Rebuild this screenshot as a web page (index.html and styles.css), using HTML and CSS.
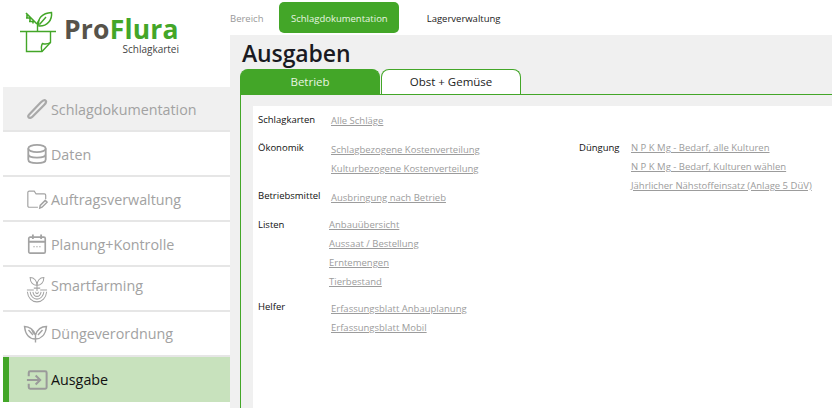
FILE: index.html
```html
<!DOCTYPE html>
<html lang="de">
<head>
<meta charset="utf-8">
<title>ProFlura Schlagkartei</title>
<link rel="stylesheet" href="styles.css">
</head>
<body>
<div class="app">
  <aside class="sidebar">
    <div class="logo">
      <svg class="logo-mark" width="38" height="42" viewBox="0 0 38 42" fill="none" stroke="#43a628" stroke-width="1.4">
        <path d="M0 20.500H36" stroke-width="1.300"/>
        <path d="M6.500 20.500V40.500H22L30.500 31.500V20.500"/>
        <path d="M22 40.500C21 37 21.500 34 22.500 32.500C25 33.500 28 33 30.500 31.500"/>
        <path d="M17.500 20.500V14C17.500 12 18 10 19 9"/>
        <path d="M19 15C17 8 22 2 31.500 1.500C32.500 9 27 15.500 19 15Z" stroke-width="1.500"/>
        <path d="M19.500 13.500L26 6"/>
        <path d="M6 2L17 13M7 3L7 7M10 6L10 10M13 9L13 12.500M6 7H10M9 10.500H13" stroke-width="1.600"/>
      </svg>
      <div class="logo-text">
        <div class="logo-name"><span class="logo-pro">Pro</span><span class="logo-flura">Flura</span></div>
        <div class="logo-sub">Schlagkartei</div>
      </div>
    </div>
    <nav class="menu">
      <a class="menu-item hover">
        <svg class="ico" viewBox="0 0 24 24" fill="none" stroke="#a9a9a9" stroke-width="2.400"><path d="M3.500 18L16 5C18 3 20.500 2 21.500 3C22.500 4 21 6.500 19.500 8L7 20.500C5.500 22 3.500 22 2.800 21C2 20 2.500 19 3.500 18Z"/></svg>
        <span>Schlagdokumentation</span>
      </a>
      <a class="menu-item">
        <svg class="ico" viewBox="0 0 24 24" fill="none" stroke="#a3a3a3" stroke-width="2"><ellipse cx="12" cy="6" rx="9.500" ry="4"/><path d="M2.500 6V18C2.500 20.500 7 22 12 22S21.500 20.500 21.500 18V6M2.500 12C2.500 14.500 7 16 12 16S21.500 14.500 21.500 12"/></svg>
        <span>Daten</span>
      </a>
      <a class="menu-item">
        <svg class="ico" viewBox="0 0 24 24" fill="none" stroke="#a3a3a3" stroke-width="1.300"><path d="M13 21H3.500C2.500 21 2 20.500 2 19.500V5C2 4 2.500 3.500 3.500 3.500H9L11 6.500H20C21 6.500 21.500 7 21.500 8V12"/><path d="M15 22L15.500 19L21 13.500L23 15.500L17.500 21Z" stroke-width="1.600"/></svg>
        <span>Auftragsverwaltung</span>
      </a>
      <a class="menu-item">
        <svg class="ico" viewBox="0 0 24 24" fill="none" stroke="#a3a3a3" stroke-width="1.800"><rect x="3" y="4.500" width="18" height="17.500" rx="1.500"/><path d="M3 9.500H21M7.500 1.500V6.500M16.500 1.500V6.500" stroke-width="2"/><path d="M8 15H9.500M11.200 15H12.700M14.400 15H15.900" stroke-width="1.200"/></svg>
        <span>Planung+Kontrolle</span>
      </a>
      <a class="menu-item smart">
        <svg class="ico ico-tall" viewBox="0 0 24 29" fill="none" stroke="#a3a3a3" stroke-width="1.100"><path d="M12 16V9M12 10C8 10 4.500 7 4.500 1.500C9 1.500 12 5 12 10ZM12 10C12 5 15 1.500 19.500 1.500C19.500 7 16 10 12 10Z"/><path d="M1 15H8.500M15.500 15H23M8.500 13H15.500" /><path d="M1.500 17C2 23.500 6.500 28 12 28S22 23.500 22.500 17M4.500 17C5 21.500 8 25 12 25S19 21.500 19.500 17M7.500 17C8 19.500 9.500 22 12 22S16 19.500 16.500 17M10.500 17C10.500 18.500 11 19 12 19S13.500 18.500 13.500 17"/></svg>
        <span>Smartfarming</span>
      </a>
      <a class="menu-item flat">
        <svg class="ico ico-wide" viewBox="0 0 24 18" fill="none" stroke="#a3a3a3" stroke-width="1.400"><path d="M12 17.500V10M12 14C6.500 14 2 10.500 1 1.500C4 1.500 6 2.500 8 4M12 14C17 14 22 10.500 23 1.500C18 1.500 14 4 12 10C11 7 9.500 5 8 4C9 7 10.500 9 12 10"/><path d="M5 5L9.500 10M19 5L14.500 10"/></svg>
        <span>Düngeverordnung</span>
      </a>
      <a class="menu-item flat active">
        <svg class="ico" viewBox="0 0 24 24" fill="none" stroke="#9a9a9a" stroke-width="2.200"><path d="M3 8V4C3 3 3.500 2.500 4.500 2.500H21C22 2.500 22.500 3 22.500 4V20C22.500 21 22 21.500 21 21.500H4.500C3.500 21.500 3 21 3 20V16"/><path d="M1 12H15M10.500 7L15.500 12L10.500 17"/></svg>
        <span>Ausgabe</span>
      </a>
    </nav>
  </aside>
  <div class="main">
    <header class="topnav">
      <span class="topnav-label">Bereich</span>
      <a class="topnav-btn current">Schlagdokumentation</a>
      <a class="topnav-btn">Lagerverwaltung</a>
    </header>
    <section class="stage">
      <h1 class="title">Ausgaben</h1>
      <div class="tabs">
        <a class="tab on">Betrieb</a>
        <a class="tab">Obst + Gemüse</a>
      </div>
      <div class="panel">
        <div class="sheet">
          <div class="col col-left">
            <div class="group g-karten"><div class="label">Schlagkarten</div><div class="links"><a>Alle Schläge</a></div></div>
            <div class="group g-oeko"><div class="label">Ökonomik</div><div class="links"><a>Schlagbezogene Kostenverteilung</a><a>Kulturbezogene Kostenverteilung</a></div></div>
            <div class="group g-mittel"><div class="label">Betriebsmittel</div><div class="links"><a>Ausbringung nach Betrieb</a></div></div>
            <div class="group g-listen"><div class="label">Listen</div><div class="links shift"><a>Anbauübersicht</a><a>Aussaat / Bestellung</a><a>Erntemengen</a><a>Tierbestand</a></div></div>
            <div class="group g-helfer"><div class="label">Helfer</div><div class="links"><a>Erfassungsblatt Anbauplanung</a><a>Erfassungsblatt Mobil</a></div></div>
          </div>
          <div class="col col-right">
            <div class="group g-duengung"><div class="label">Düngung</div><div class="links"><a>N P K Mg - Bedarf, alle Kulturen</a><a>N P K Mg - Bedarf, Kulturen wählen</a><a>Jährlicher Nähstoffeinsatz (Anlage 5 DüV)</a></div></div>
          </div>
        </div>
      </div>
    </section>
  </div>
</div>
</body>
</html>
```
FILE: styles.css
```css
* { box-sizing: border-box; }
html, body { margin: 0; height: 408px; overflow: hidden; background: #fff; }
body { font-family: "Open Sans", "Noto Sans", sans-serif; color: #111; }
.app { display: flex; width: 832px; height: 408px; }

.sidebar { width: 230px; flex: none; padding-left: 3px; }
.logo { height: 87px; display: flex; padding: 11px 0 0 17px; gap: 7px; }
.logo-mark { flex: none; }
.logo-text { width: 115px; margin-left: -1px; padding-top: 3px; }
.logo-name { font-weight: 700; font-size: 26.500px; line-height: 30px; letter-spacing: .2px; white-space: nowrap; }
.logo-pro { color: #57534a; }
.logo-flura { color: #43a628; }
.logo-sub { font-size: 10px; line-height: 10px; text-align: right; color: #444; }

.menu { display: flex; flex-direction: column; }
.menu-item { height: 45px; display: flex; align-items: center; gap: 3px; padding: 1px 0 0 23px; font-size: 14.300px; color: #a2a2a2; border-bottom: 2px solid #e6e6e6; }
.menu-item span { line-height: 22px; margin-top: 2px; }
.menu-item.flat span { margin-top: 0; }
.menu-item.hover { background: #f0f0f0; }
.menu-item.active { background: #c8e2bd; color: #111; border-bottom: 0; border-left: 6px solid #43a628; padding-left: 17px; }
.menu-item.smart { align-items: flex-start; padding-top: 9px; }
.menu-item.smart span { margin-top: -1px; }
.ico { width: 22px; height: 22px; flex: none; }
.ico-tall { height: 27px; }
.ico-wide { width: 25px; height: 18px; margin-left: -3px; }

.main { flex: 1; min-width: 0; display: flex; flex-direction: column; }
.topnav { height: 35px; flex: none; display: flex; align-items: flex-start; padding-top: 2px; font-size: 9.500px; }
.topnav-label { color: #999; line-height: 34px; margin-right: 16px; }
.topnav-btn { height: 31px; line-height: 34px; padding: 0 11.500px; border-radius: 5px; color: #222; margin-right: 16px; }
.topnav-btn.current { background: #43a628; color: #e8f5e0; }
.stage { flex: 1; min-height: 0; display: flex; flex-direction: column; background: #f0f0f0; padding-left: 10px; overflow: hidden; }
.title { margin: 0; flex: none; height: 34px; padding: 1px 0 0 2px; font-size: 23px; line-height: 34px; font-weight: 600; color: #1a1a22; letter-spacing: -.1px; }
.tabs { display: flex; flex: none; gap: 1px; height: 25px; }
.tab { width: 140px; background: #fff; border: 1px solid #43a628; border-bottom: 0; border-radius: 8px 8px 0 0; text-align: center; font-size: 11.500px; line-height: 23px; color: #222; }
.tab.on { background: #43a628; color: #e8f5e0; }
.panel { flex: 1; min-height: 0; border-top: 1px solid #43a628; border-left: 1px solid #43a628; padding: 11px 0 0 12px; }
.sheet { background: #fff; height: 100%; display: flex; font-size: 9.500px; }
.col-left { width: 326px; padding-left: 5px; flex: none; }
.col-right { padding-top: 32px; }
.group { display: flex; }
.label { width: 73px; flex: none; color: #111; line-height: 19px; }
.links { display: flex; flex-direction: column; padding-top: 2px; }
.links.shift { margin-left: -2px; padding-top: 0; }
.links a { line-height: 19px; color: #9c9c9c; text-decoration: underline; }
.g-karten { height: 32px; padding-top: 4px; }
.g-karten .links { padding-top: 1px; }
.g-oeko { height: 48px; }
.g-mittel { height: 29px; }
.g-listen { height: 82px; }
.g-duengung .label { width: 52px; }
.g-duengung .links { padding-top: 0; }
```
